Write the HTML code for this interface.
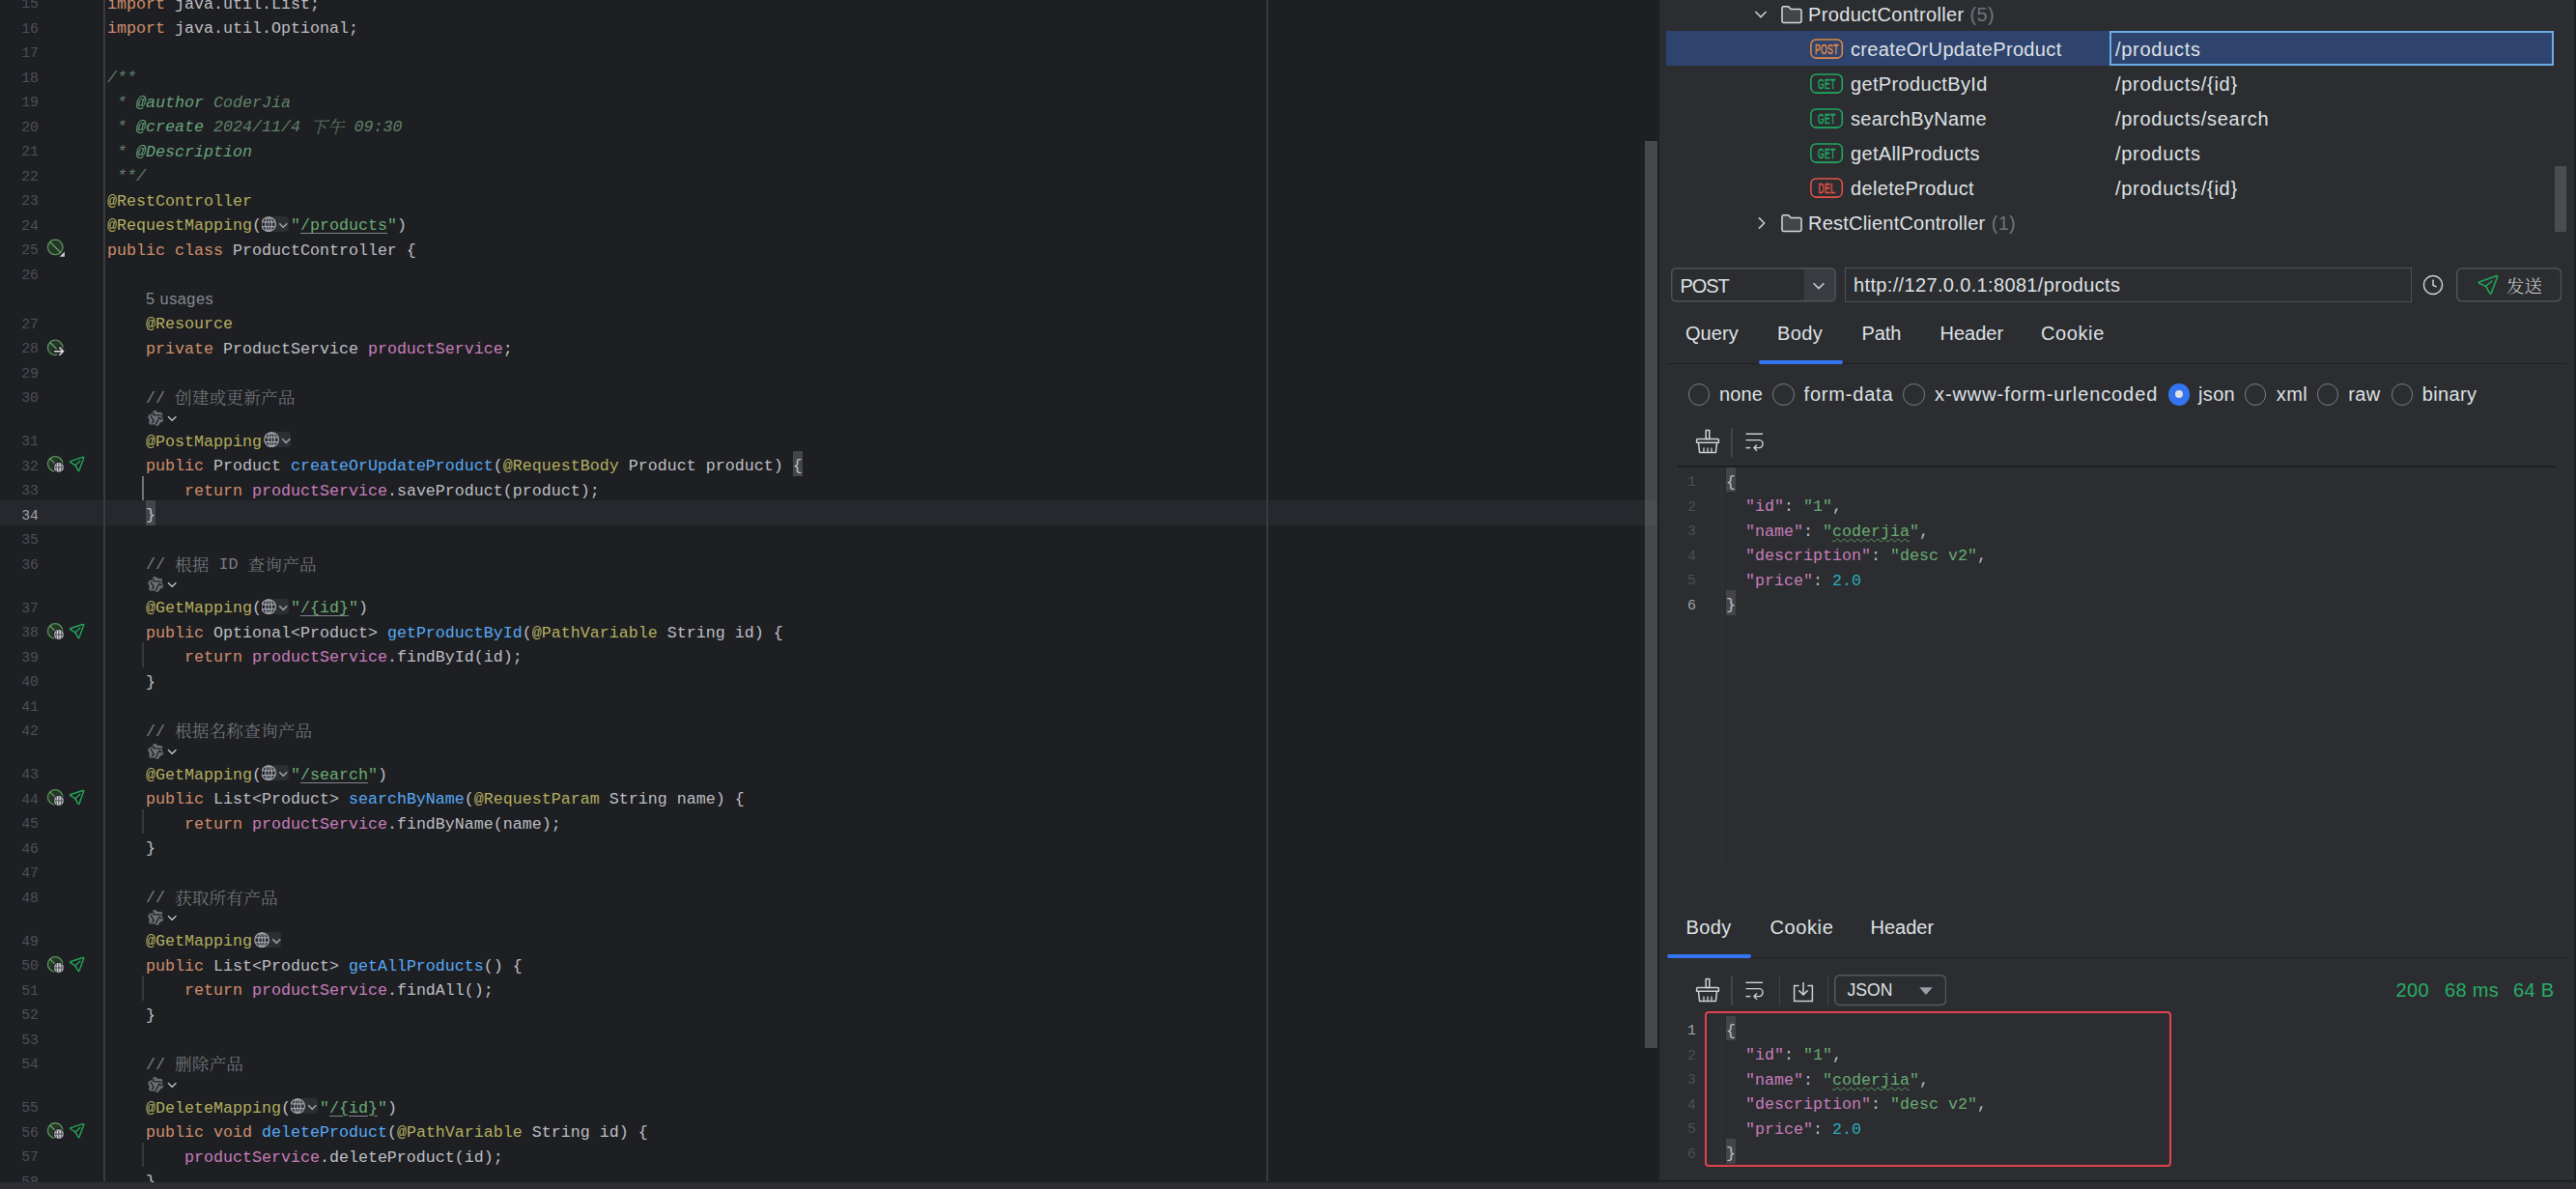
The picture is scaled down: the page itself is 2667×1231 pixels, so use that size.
<!DOCTYPE html>
<html lang="zh"><head><meta charset="utf-8"><title>ProductController</title>
<style>
*{box-sizing:border-box}
html,body{margin:0;padding:0}
body{width:2667px;height:1231px;overflow:hidden;background:#1e1f22;position:relative;font-family:"Liberation Sans","Noto Sans CJK SC",sans-serif;color:#bcbec4}
#ed{position:absolute;left:0;top:0;width:1718px;height:1223.5px;overflow:hidden;background:#1e1f22}
#ed>div,#rp>div,#rp>svg{position:absolute}
.cur{left:0;width:1715px;height:26px;background:#26282e}
.gsep{left:107.3px;top:0;width:1.6px;height:1223px;background:#393b40}
.rm{left:1311px;top:0;width:1.5px;height:1223px;background:#393b40}
.sb{left:1702.5px;top:146px;width:13px;height:938.5px;background:rgba(128,128,128,.42)}
.ln{left:0;width:40px;text-align:right;font:14.8px/25.5px "Liberation Mono",monospace;color:#4b5059;height:25.5px;padding-top:3.5px}
.ln.cl{color:#a1a3ab}
.cd{left:111px;height:25.5px;white-space:pre;font:16.667px/25.5px "Liberation Mono","Noto Serif CJK SC",monospace;color:#bcbec4;padding-top:3px;-webkit-text-stroke:0}
.cd .z{font-size:17.6px;font-family:"Noto Serif CJK SC",serif;line-height:1px;font-weight:300;-webkit-text-stroke:0;position:relative;top:1.5px;letter-spacing:0.2px}
.k{color:#cf8e6d}.a{color:#b3ae60}.f{color:#56a8f5}.p{color:#c77dbb}.s{color:#6aab73}.c{color:#7a7e85}.n{color:#2aacb8}
.d{color:#5f826b;font-style:italic}.t{color:#67a37c;font-style:italic}
.u{text-decoration:underline;text-decoration-color:#80848b;text-decoration-thickness:1.2px;text-underline-offset:3px}
.w{text-decoration:underline wavy #57965c;text-decoration-thickness:1.1px;text-underline-offset:1.5px;text-decoration-skip-ink:none}
.bh{background:#43454a;display:inline-block;height:25.5px;vertical-align:top;margin-top:-3px;padding-top:3px}
.gi{display:inline-block;width:30px;height:16px;vertical-align:top;margin-top:2.5px;background:linear-gradient(90deg,rgba(43,45,48,0) 0,rgba(43,45,48,0) 8px,#2c2e32 16px);border-radius:4px;overflow:hidden;line-height:0}
.gi svg{display:block}
.gi.gp{width:28.5px;margin-right:1.5px;background:linear-gradient(90deg,rgba(43,45,48,0) 0,rgba(43,45,48,0) 6px,#2c2e32 14px)}
.gw{left:40px;top:0;width:0;height:0}
.gsv{position:absolute;left:0}
.us{left:151px;font:16.3px/25.5px "Liberation Sans",sans-serif;color:#868a91;padding-top:2px;letter-spacing:0.5px}
.hi{left:152px;height:19.5px;line-height:0;padding-top:1.5px}
.ig{left:147.3px;width:1.6px;height:25.5px}
#rp{position:absolute;left:1718px;top:0;width:947px;height:1222px;background:#2b2d30;overflow:hidden}
#rp>*{margin-left:-1718px}
#bt{position:absolute;left:0;top:1224px;width:2667px;height:7px;background:#2b2d30}
.sel{left:1725px;top:32px;width:918px;height:36px;background:#2e436e}
.edc{left:2184px;top:32px;width:459.5px;height:36.3px;border:2px solid #6cace9}
.tx{font-size:20px;line-height:36px;color:#dfe1e5;white-space:nowrap;letter-spacing:0.35px}
.g{color:#6f737a}
.bdw{left:1874px}
.bd{display:block;position:relative;width:34.2px;height:21px;text-align:center;line-height:21px}
.bd svg{position:absolute;left:0;top:0}
.bd i{display:block;position:absolute;left:-13px;right:-13px;top:-0.5px;font:15px/21px "Liberation Sans",sans-serif;font-style:normal;transform:scaleX(.575);transform-origin:50% 50%;letter-spacing:0.5px;-webkit-text-stroke:0.5px;text-indent:0.5px}
.tsb{left:2645px;top:172px;width:12px;height:68px;background:#4a4c50}
.box{border:1px solid #4e5157;background:transparent}
.arr{position:absolute;right:0;top:0;bottom:0;width:33px;background:#393b40;border-radius:0 4px 4px 0}
.send{font-family:"Noto Serif CJK SC",serif;font-size:18.5px;letter-spacing:0;color:#ced0d6;font-weight:300}
.hl{background:#1e1f22}
.ul{height:4.2px;background:#3574f0;border-radius:2px}
.rd{width:22.5px;height:22.5px;border-radius:50%;border:1.6px solid #7a7d84}
.rd.on{border:none;background:#3574f0}
.rd.on:after{content:"";position:absolute;left:7.25px;top:7.25px;width:8px;height:8px;border-radius:50%;background:#dfe1e5}
.ic{line-height:0}
.vs{width:1.5px;height:30px;background:#43454a}
.jg{left:1782.3px;width:1.2px;background:#323438}
.jn{left:1729px;width:27px;text-align:right;font:14.8px/25.5px "Liberation Mono",monospace;color:#4b5059;padding-top:3.5px}
.jn.cl{color:#a1a3ab}
.cd.jc{left:1787px}
.st{color:#27ad67}
.red{left:1765px;top:1047px;width:483.2px;height:161px;border:2px solid #e0434f;border-radius:4px}
</style></head><body>
<div id="ed">
<div class="cur" style="top:518.0px"></div><div class="gsep"></div><div class="rm"></div>
<div class="ln" style="top:-11.50px">15</div>
<div class="cd" style="top:-11.50px"><span class="k">import</span> java.util.List;</div>
<div class="ln" style="top:14.00px">16</div>
<div class="cd" style="top:14.00px"><span class="k">import</span> java.util.Optional;</div>
<div class="ln" style="top:39.50px">17</div>
<div class="ln" style="top:65.00px">18</div>
<div class="cd" style="top:65.00px"><span class="d">/**</span></div>
<div class="ln" style="top:90.50px">19</div>
<div class="cd" style="top:90.50px"><span class="d"> * </span><span class="t">@author</span><span class="d"> CoderJia</span></div>
<div class="ln" style="top:116.00px">20</div>
<div class="cd" style="top:116.00px"><span class="d"> * </span><span class="t">@create</span><span class="d"> 2024/11/4 <span class="z">下午</span> 09:30</span></div>
<div class="ln" style="top:141.50px">21</div>
<div class="cd" style="top:141.50px"><span class="d"> * </span><span class="t">@Description</span></div>
<div class="ln" style="top:167.00px">22</div>
<div class="cd" style="top:167.00px"><span class="d"> **/</span></div>
<div class="ln" style="top:192.50px">23</div>
<div class="cd" style="top:192.50px"><span class="a">@RestController</span></div>
<div class="ln" style="top:218.00px">24</div>
<div class="cd" style="top:218.00px"><span class="a">@RequestMapping</span>(<span class="gi gp"><svg width="30" height="16" viewBox="0 0 30 16"><g transform="translate(-3,0)"><g fill="none" stroke="#a3a6ae" stroke-width="1.3"><circle cx="10.1" cy="8.2" r="7.3"/><ellipse cx="10.1" cy="8.2" rx="3.3" ry="7.3"/><path d="M3.4 5.900h13.400M3.400 10.600h13.400M10.100 .9v14.600" stroke-width="1.150"/></g><path d="M21.2 7.2l4.050 4.100 4.050-4.100" fill="none" stroke="#9a9da5" stroke-width="1.600"/></g></svg></span><span class="s">"</span><span class="s u">/products</span><span class="s">"</span>)</div>
<div class="ln" style="top:243.50px">25</div>
<div class="gw"><svg class="gsv" style="top:239.50px" width="60" height="34" viewBox="0 0 60 34"><circle cx="17.20" cy="15.95" r="7.75" fill="#253627" stroke="#57965c" stroke-width="1.3"/><path d="M11.60 10.35L22.80 21.55" stroke="#6fae74" stroke-width="1.1" fill="none"/><path d="M27.60 19.55v6.6h-6.6z" fill="#1e1f22"/><path d="M26.90 20.55v5.2h-5.2z" fill="#ced0d6"/></svg></div>
<div class="cd" style="top:243.50px"><span class="k">public class</span> ProductController {</div>
<div class="ln" style="top:269.00px">26</div>
<div class="ln" style="top:320.00px">27</div>
<div class="cd" style="top:320.00px">    <span class="a">@Resource</span></div>
<div class="ln" style="top:345.50px">28</div>
<div class="gw"><svg class="gsv" style="top:341.50px" width="60" height="34" viewBox="0 0 60 34"><circle cx="17.20" cy="17.90" r="7.75" fill="#253627" stroke="#57965c" stroke-width="1.3"/><path d="M11.60 12.30L22.80 23.50" stroke="#6fae74" stroke-width="1.1" fill="none"/><path d="M16.60 21.70H25.50M21.40 17.60L25.50 21.70L21.40 25.80" stroke="#1e1f22" stroke-width="4.4" fill="none" stroke-linecap="round"/><path d="M16.00 21.70H25.50M21.40 17.60L25.50 21.70L21.40 25.80" stroke="#dfe1e5" stroke-width="1.500" fill="none"/></svg></div>
<div class="cd" style="top:345.50px">    <span class="k">private</span> ProductService <span class="p">productService</span>;</div>
<div class="ln" style="top:371.00px">29</div>
<div class="ln" style="top:396.50px">30</div>
<div class="cd" style="top:396.50px">    <span class="c">// <span class="z">创建或更新产品</span></span></div>
<div class="ln" style="top:441.50px">31</div>
<div class="cd" style="top:441.50px">    <span class="a">@PostMapping</span><span class="gi"><svg width="30" height="16" viewBox="0 0 30 16"><g transform="translate(0,0)"><g fill="none" stroke="#a3a6ae" stroke-width="1.3"><circle cx="10.1" cy="8.2" r="7.3"/><ellipse cx="10.1" cy="8.2" rx="3.3" ry="7.3"/><path d="M3.4 5.900h13.400M3.400 10.600h13.400M10.100 .9v14.600" stroke-width="1.150"/></g><path d="M21.2 7.2l4.050 4.100 4.050-4.100" fill="none" stroke="#9a9da5" stroke-width="1.600"/></g></svg></span></div>
<div class="ln" style="top:467.00px">32</div>
<div class="gw"><svg class="gsv" style="top:463.00px" width="60" height="34" viewBox="0 0 60 34"><circle cx="17.20" cy="17.30" r="7.75" fill="#253627" stroke="#57965c" stroke-width="1.3"/><path d="M11.60 11.70L21.20 21.30" stroke="#6fae74" stroke-width="1.1" fill="none"/><circle cx="20.90" cy="20.90" r="6.1" fill="#1e1f22"/><circle cx="20.90" cy="20.90" r="4.9" fill="#d3d5db"/><path d="M16.20 20.90h9.4M20.90 16.20v9.4M18.70 17.10c-1.1 2.3-1.1 5.3 0 7.6M23.10 17.10c1.1 2.3 1.1 5.3 0 7.6" stroke="#34363b" stroke-width="0.9" fill="none"/><path d="M33.16 -1.52Q31.70 -2.40 33.32 -2.92L45.58 -6.88Q47.20 -7.40 46.61 -5.81L42.09 6.41Q41.50 8.00 40.70 6.50L38.80 2.90Q38.00 1.40 36.54 0.52Z" transform="translate(0,17.30)" fill="none" stroke="#23a559" stroke-width="1.4" stroke-linejoin="round"/><path d="M38.00 1.40L42.90 -3.10" transform="translate(0,17.30)" fill="none" stroke="#23a559" stroke-width="1.4" stroke-linecap="round"/></svg></div>
<div class="cd" style="top:467.00px">    <span class="k">public</span> Product <span class="f">createOrUpdateProduct</span>(<span class="a">@RequestBody</span> Product product) <span class="bh">{</span></div>
<div class="ln" style="top:492.50px">33</div>
<div class="cd" style="top:492.50px">        <span class="k">return</span> <span class="p">productService</span>.saveProduct(product);</div>
<div class="ln cl" style="top:518.00px">34</div>
<div class="cd" style="top:518.00px">    <span class="bh">}</span></div>
<div class="ln" style="top:543.50px">35</div>
<div class="ln" style="top:569.00px">36</div>
<div class="cd" style="top:569.00px">    <span class="c">// <span class="z">根据</span> ID <span class="z">查询产品</span></span></div>
<div class="ln" style="top:614.00px">37</div>
<div class="cd" style="top:614.00px">    <span class="a">@GetMapping</span>(<span class="gi gp"><svg width="30" height="16" viewBox="0 0 30 16"><g transform="translate(-3,0)"><g fill="none" stroke="#a3a6ae" stroke-width="1.3"><circle cx="10.1" cy="8.2" r="7.3"/><ellipse cx="10.1" cy="8.2" rx="3.3" ry="7.3"/><path d="M3.4 5.900h13.400M3.400 10.600h13.400M10.100 .9v14.600" stroke-width="1.150"/></g><path d="M21.2 7.2l4.050 4.100 4.050-4.100" fill="none" stroke="#9a9da5" stroke-width="1.600"/></g></svg></span><span class="s">"</span><span class="s u">/{id}</span><span class="s">"</span>)</div>
<div class="ln" style="top:639.50px">38</div>
<div class="gw"><svg class="gsv" style="top:635.50px" width="60" height="34" viewBox="0 0 60 34"><circle cx="17.20" cy="17.40" r="7.75" fill="#253627" stroke="#57965c" stroke-width="1.3"/><path d="M11.60 11.80L21.20 21.40" stroke="#6fae74" stroke-width="1.1" fill="none"/><circle cx="20.90" cy="21.00" r="6.1" fill="#1e1f22"/><circle cx="20.90" cy="21.00" r="4.9" fill="#d3d5db"/><path d="M16.20 21.00h9.4M20.90 16.30v9.4M18.70 17.20c-1.1 2.3-1.1 5.3 0 7.6M23.10 17.20c1.1 2.3 1.1 5.3 0 7.6" stroke="#34363b" stroke-width="0.9" fill="none"/><path d="M33.16 -1.52Q31.70 -2.40 33.32 -2.92L45.58 -6.88Q47.20 -7.40 46.61 -5.81L42.09 6.41Q41.50 8.00 40.70 6.50L38.80 2.90Q38.00 1.40 36.54 0.52Z" transform="translate(0,17.40)" fill="none" stroke="#23a559" stroke-width="1.4" stroke-linejoin="round"/><path d="M38.00 1.40L42.90 -3.10" transform="translate(0,17.40)" fill="none" stroke="#23a559" stroke-width="1.4" stroke-linecap="round"/></svg></div>
<div class="cd" style="top:639.50px">    <span class="k">public</span> Optional&lt;Product&gt; <span class="f">getProductById</span>(<span class="a">@PathVariable</span> String id) {</div>
<div class="ln" style="top:665.00px">39</div>
<div class="cd" style="top:665.00px">        <span class="k">return</span> <span class="p">productService</span>.findById(id);</div>
<div class="ln" style="top:690.50px">40</div>
<div class="cd" style="top:690.50px">    }</div>
<div class="ln" style="top:716.00px">41</div>
<div class="ln" style="top:741.50px">42</div>
<div class="cd" style="top:741.50px">    <span class="c">// <span class="z">根据名称查询产品</span></span></div>
<div class="ln" style="top:786.50px">43</div>
<div class="cd" style="top:786.50px">    <span class="a">@GetMapping</span>(<span class="gi gp"><svg width="30" height="16" viewBox="0 0 30 16"><g transform="translate(-3,0)"><g fill="none" stroke="#a3a6ae" stroke-width="1.3"><circle cx="10.1" cy="8.2" r="7.3"/><ellipse cx="10.1" cy="8.2" rx="3.3" ry="7.3"/><path d="M3.4 5.900h13.400M3.400 10.600h13.400M10.100 .9v14.600" stroke-width="1.150"/></g><path d="M21.2 7.2l4.050 4.100 4.050-4.100" fill="none" stroke="#9a9da5" stroke-width="1.600"/></g></svg></span><span class="s">"</span><span class="s u">/search</span><span class="s">"</span>)</div>
<div class="ln" style="top:812.00px">44</div>
<div class="gw"><svg class="gsv" style="top:808.00px" width="60" height="34" viewBox="0 0 60 34"><circle cx="17.20" cy="17.40" r="7.75" fill="#253627" stroke="#57965c" stroke-width="1.3"/><path d="M11.60 11.80L21.20 21.40" stroke="#6fae74" stroke-width="1.1" fill="none"/><circle cx="20.90" cy="21.00" r="6.1" fill="#1e1f22"/><circle cx="20.90" cy="21.00" r="4.9" fill="#d3d5db"/><path d="M16.20 21.00h9.4M20.90 16.30v9.4M18.70 17.20c-1.1 2.3-1.1 5.3 0 7.6M23.10 17.20c1.1 2.3 1.1 5.3 0 7.6" stroke="#34363b" stroke-width="0.9" fill="none"/><path d="M33.16 -1.52Q31.70 -2.40 33.32 -2.92L45.58 -6.88Q47.20 -7.40 46.61 -5.81L42.09 6.41Q41.50 8.00 40.70 6.50L38.80 2.90Q38.00 1.40 36.54 0.52Z" transform="translate(0,17.40)" fill="none" stroke="#23a559" stroke-width="1.4" stroke-linejoin="round"/><path d="M38.00 1.40L42.90 -3.10" transform="translate(0,17.40)" fill="none" stroke="#23a559" stroke-width="1.4" stroke-linecap="round"/></svg></div>
<div class="cd" style="top:812.00px">    <span class="k">public</span> List&lt;Product&gt; <span class="f">searchByName</span>(<span class="a">@RequestParam</span> String name) {</div>
<div class="ln" style="top:837.50px">45</div>
<div class="cd" style="top:837.50px">        <span class="k">return</span> <span class="p">productService</span>.findByName(name);</div>
<div class="ln" style="top:863.00px">46</div>
<div class="cd" style="top:863.00px">    }</div>
<div class="ln" style="top:888.50px">47</div>
<div class="ln" style="top:914.00px">48</div>
<div class="cd" style="top:914.00px">    <span class="c">// <span class="z">获取所有产品</span></span></div>
<div class="ln" style="top:959.00px">49</div>
<div class="cd" style="top:959.00px">    <span class="a">@GetMapping</span><span class="gi"><svg width="30" height="16" viewBox="0 0 30 16"><g transform="translate(0,0)"><g fill="none" stroke="#a3a6ae" stroke-width="1.3"><circle cx="10.1" cy="8.2" r="7.3"/><ellipse cx="10.1" cy="8.2" rx="3.3" ry="7.3"/><path d="M3.4 5.900h13.400M3.400 10.600h13.400M10.100 .9v14.600" stroke-width="1.150"/></g><path d="M21.2 7.2l4.050 4.100 4.050-4.100" fill="none" stroke="#9a9da5" stroke-width="1.600"/></g></svg></span></div>
<div class="ln" style="top:984.50px">50</div>
<div class="gw"><svg class="gsv" style="top:980.50px" width="60" height="34" viewBox="0 0 60 34"><circle cx="17.20" cy="17.40" r="7.75" fill="#253627" stroke="#57965c" stroke-width="1.3"/><path d="M11.60 11.80L21.20 21.40" stroke="#6fae74" stroke-width="1.1" fill="none"/><circle cx="20.90" cy="21.00" r="6.1" fill="#1e1f22"/><circle cx="20.90" cy="21.00" r="4.9" fill="#d3d5db"/><path d="M16.20 21.00h9.4M20.90 16.30v9.4M18.70 17.20c-1.1 2.3-1.1 5.3 0 7.6M23.10 17.20c1.1 2.3 1.1 5.3 0 7.6" stroke="#34363b" stroke-width="0.9" fill="none"/><path d="M33.16 -1.52Q31.70 -2.40 33.32 -2.92L45.58 -6.88Q47.20 -7.40 46.61 -5.81L42.09 6.41Q41.50 8.00 40.70 6.50L38.80 2.90Q38.00 1.40 36.54 0.52Z" transform="translate(0,17.40)" fill="none" stroke="#23a559" stroke-width="1.4" stroke-linejoin="round"/><path d="M38.00 1.40L42.90 -3.10" transform="translate(0,17.40)" fill="none" stroke="#23a559" stroke-width="1.4" stroke-linecap="round"/></svg></div>
<div class="cd" style="top:984.50px">    <span class="k">public</span> List&lt;Product&gt; <span class="f">getAllProducts</span>() {</div>
<div class="ln" style="top:1010.00px">51</div>
<div class="cd" style="top:1010.00px">        <span class="k">return</span> <span class="p">productService</span>.findAll();</div>
<div class="ln" style="top:1035.50px">52</div>
<div class="cd" style="top:1035.50px">    }</div>
<div class="ln" style="top:1061.00px">53</div>
<div class="ln" style="top:1086.50px">54</div>
<div class="cd" style="top:1086.50px">    <span class="c">// <span class="z">删除产品</span></span></div>
<div class="ln" style="top:1131.50px">55</div>
<div class="cd" style="top:1131.50px">    <span class="a">@DeleteMapping</span>(<span class="gi gp"><svg width="30" height="16" viewBox="0 0 30 16"><g transform="translate(-3,0)"><g fill="none" stroke="#a3a6ae" stroke-width="1.3"><circle cx="10.1" cy="8.2" r="7.3"/><ellipse cx="10.1" cy="8.2" rx="3.3" ry="7.3"/><path d="M3.4 5.900h13.400M3.400 10.600h13.400M10.100 .9v14.600" stroke-width="1.150"/></g><path d="M21.2 7.2l4.050 4.100 4.050-4.100" fill="none" stroke="#9a9da5" stroke-width="1.600"/></g></svg></span><span class="s">"</span><span class="s u">/{id}</span><span class="s">"</span>)</div>
<div class="ln" style="top:1157.00px">56</div>
<div class="gw"><svg class="gsv" style="top:1153.00px" width="60" height="34" viewBox="0 0 60 34"><circle cx="17.20" cy="17.50" r="7.75" fill="#253627" stroke="#57965c" stroke-width="1.3"/><path d="M11.60 11.90L21.20 21.50" stroke="#6fae74" stroke-width="1.1" fill="none"/><circle cx="20.90" cy="21.10" r="6.1" fill="#1e1f22"/><circle cx="20.90" cy="21.10" r="4.9" fill="#d3d5db"/><path d="M16.20 21.10h9.4M20.90 16.40v9.4M18.70 17.30c-1.1 2.3-1.1 5.3 0 7.6M23.10 17.30c1.1 2.3 1.1 5.3 0 7.6" stroke="#34363b" stroke-width="0.9" fill="none"/><path d="M33.16 -1.52Q31.70 -2.40 33.32 -2.92L45.58 -6.88Q47.20 -7.40 46.61 -5.81L42.09 6.41Q41.50 8.00 40.70 6.50L38.80 2.90Q38.00 1.40 36.54 0.52Z" transform="translate(0,17.50)" fill="none" stroke="#23a559" stroke-width="1.4" stroke-linejoin="round"/><path d="M38.00 1.40L42.90 -3.10" transform="translate(0,17.50)" fill="none" stroke="#23a559" stroke-width="1.4" stroke-linecap="round"/></svg></div>
<div class="cd" style="top:1157.00px">    <span class="k">public void</span> <span class="f">deleteProduct</span>(<span class="a">@PathVariable</span> String id) {</div>
<div class="ln" style="top:1182.50px">57</div>
<div class="cd" style="top:1182.50px">        <span class="p">productService</span>.deleteProduct(id);</div>
<div class="ln" style="top:1208.00px">58</div>
<div class="cd" style="top:1208.00px">    }</div>
<div class="us" style="top:294.50px">5 usages</div>
<div class="hi" style="top:422.00px"><svg width="34" height="20" viewBox="0 0 34 20"><path d="M7.3 1.050L9.9 1.250 10.5 2.800 15.4 3.100 16.3 4.900 15.4 6.900 17.1 10.100 16.4 12.750 14.2 13.200 11.5 17 9.1 16.500 8.5 15.400 3.100 15.400 2.050 13.200 2.900 11.300 1.050 7.400 2.700 5.100 5.500 4.500 6.500 1.850Z" fill="#6c6f75"/><path d="M7.4 2.900L6.600 5.700 15 6.200M3.800 6.200L7.400 12.100 4.700 14M9.200 15.400L12.750 8.400 16 10.100" fill="none" stroke="#1e1f22" stroke-width="1.250" stroke-linejoin="round"/><path d="M22 7.200l4.200 4.100 4.200-4.100" fill="none" stroke="#c8cad0" stroke-width="1.200"/></svg></div>
<div class="hi" style="top:594.50px"><svg width="34" height="20" viewBox="0 0 34 20"><path d="M7.3 1.050L9.9 1.250 10.5 2.800 15.4 3.100 16.3 4.900 15.4 6.900 17.1 10.100 16.4 12.750 14.2 13.200 11.5 17 9.1 16.500 8.5 15.400 3.100 15.400 2.050 13.200 2.900 11.300 1.050 7.400 2.700 5.100 5.500 4.500 6.500 1.850Z" fill="#6c6f75"/><path d="M7.4 2.900L6.600 5.700 15 6.200M3.800 6.200L7.400 12.100 4.700 14M9.200 15.400L12.750 8.400 16 10.100" fill="none" stroke="#1e1f22" stroke-width="1.250" stroke-linejoin="round"/><path d="M22 7.200l4.200 4.100 4.200-4.100" fill="none" stroke="#c8cad0" stroke-width="1.200"/></svg></div>
<div class="hi" style="top:767.00px"><svg width="34" height="20" viewBox="0 0 34 20"><path d="M7.3 1.050L9.9 1.250 10.5 2.800 15.4 3.100 16.3 4.900 15.4 6.900 17.1 10.100 16.4 12.750 14.2 13.200 11.5 17 9.1 16.500 8.5 15.400 3.100 15.400 2.050 13.200 2.900 11.300 1.050 7.400 2.700 5.100 5.500 4.500 6.500 1.850Z" fill="#6c6f75"/><path d="M7.4 2.900L6.600 5.700 15 6.200M3.800 6.200L7.400 12.100 4.700 14M9.200 15.400L12.750 8.400 16 10.100" fill="none" stroke="#1e1f22" stroke-width="1.250" stroke-linejoin="round"/><path d="M22 7.200l4.200 4.100 4.200-4.100" fill="none" stroke="#c8cad0" stroke-width="1.200"/></svg></div>
<div class="hi" style="top:939.50px"><svg width="34" height="20" viewBox="0 0 34 20"><path d="M7.3 1.050L9.9 1.250 10.5 2.800 15.4 3.100 16.3 4.900 15.4 6.900 17.1 10.100 16.4 12.750 14.2 13.200 11.5 17 9.1 16.500 8.5 15.400 3.100 15.400 2.050 13.200 2.900 11.300 1.050 7.400 2.700 5.100 5.500 4.500 6.500 1.850Z" fill="#6c6f75"/><path d="M7.4 2.900L6.600 5.700 15 6.200M3.800 6.200L7.400 12.100 4.700 14M9.200 15.400L12.750 8.400 16 10.100" fill="none" stroke="#1e1f22" stroke-width="1.250" stroke-linejoin="round"/><path d="M22 7.200l4.200 4.100 4.200-4.100" fill="none" stroke="#c8cad0" stroke-width="1.200"/></svg></div>
<div class="hi" style="top:1112.00px"><svg width="34" height="20" viewBox="0 0 34 20"><path d="M7.3 1.050L9.9 1.250 10.5 2.800 15.4 3.100 16.3 4.900 15.4 6.900 17.1 10.100 16.4 12.750 14.2 13.200 11.5 17 9.1 16.500 8.5 15.400 3.100 15.400 2.050 13.200 2.900 11.300 1.050 7.400 2.700 5.100 5.500 4.500 6.500 1.850Z" fill="#6c6f75"/><path d="M7.4 2.900L6.600 5.700 15 6.200M3.800 6.200L7.400 12.100 4.700 14M9.200 15.400L12.750 8.400 16 10.100" fill="none" stroke="#1e1f22" stroke-width="1.250" stroke-linejoin="round"/><path d="M22 7.200l4.200 4.100 4.200-4.100" fill="none" stroke="#c8cad0" stroke-width="1.200"/></svg></div>
<div class="ig" style="top:492.50px;background:#6f737a"></div>
<div class="ig" style="top:665.00px;background:#36383d"></div>
<div class="ig" style="top:837.50px;background:#36383d"></div>
<div class="ig" style="top:1010.00px;background:#36383d"></div>
<div class="ig" style="top:1182.50px;background:#36383d"></div>
<div class="sb"></div>
</div>
<div id="rp">
<div class="sel"></div><div class="edc"></div>
<svg class="chv" style="left:1816px;top:9px" width="14" height="12" viewBox="0 0 14 12"><path d="M1.4 3l5.6 5.6L12.6 3" fill="none" stroke="#ced0d6" stroke-width="1.5"/></svg>
<div class="fi" style="left:1843px;top:5px"><svg class="fo" width="24" height="20" viewBox="0 0 24 20"><path d="M2 3.2a1.4 1.4 0 0 1 1.4-1.4h5.2l2.6 2.8h9.4a1.4 1.4 0 0 1 1.4 1.4v11a1.4 1.4 0 0 1-1.4 1.4H3.4A1.4 1.4 0 0 1 2 17z" fill="#43454a" stroke="#d7d9de" stroke-width="1.5" stroke-linejoin="round"/></svg></div>
<div class="tx" style="left:1872px;top:-3px">ProductController <span class="g">(5)</span></div>
<div class="bdw" style="top:40.0px"><span class="bd" style="color:#e08a42"><svg width="36" height="22" viewBox="0 0 36 22"><rect x="0.9" y="0.900" width="32.4" height="19.200" rx="5.2" fill="none" stroke="#e08a42" stroke-width="1.550"/></svg><i>POST</i></span></div>
<div class="tx" style="left:1916px;top:33px">createOrUpdateProduct</div>
<div class="tx" style="left:2190px;top:33px;letter-spacing:0.72px">/products</div>
<div class="bdw" style="top:76.0px"><span class="bd" style="color:#20aa62"><svg width="36" height="22" viewBox="0 0 36 22"><rect x="0.9" y="0.900" width="32.4" height="19.200" rx="5.2" fill="none" stroke="#20aa62" stroke-width="1.550"/></svg><i>GET</i></span></div>
<div class="tx" style="left:1916px;top:69px">getProductById</div>
<div class="tx" style="left:2190px;top:69px;letter-spacing:0.72px">/products/{id}</div>
<div class="bdw" style="top:112.0px"><span class="bd" style="color:#20aa62"><svg width="36" height="22" viewBox="0 0 36 22"><rect x="0.9" y="0.900" width="32.4" height="19.200" rx="5.2" fill="none" stroke="#20aa62" stroke-width="1.550"/></svg><i>GET</i></span></div>
<div class="tx" style="left:1916px;top:105px">searchByName</div>
<div class="tx" style="left:2190px;top:105px;letter-spacing:0.72px">/products/search</div>
<div class="bdw" style="top:148.0px"><span class="bd" style="color:#20aa62"><svg width="36" height="22" viewBox="0 0 36 22"><rect x="0.9" y="0.900" width="32.4" height="19.200" rx="5.2" fill="none" stroke="#20aa62" stroke-width="1.550"/></svg><i>GET</i></span></div>
<div class="tx" style="left:1916px;top:141px">getAllProducts</div>
<div class="tx" style="left:2190px;top:141px;letter-spacing:0.72px">/products</div>
<div class="bdw" style="top:184.0px"><span class="bd" style="color:#e5534b"><svg width="36" height="22" viewBox="0 0 36 22"><rect x="0.9" y="0.900" width="32.4" height="19.200" rx="5.2" fill="none" stroke="#e5534b" stroke-width="1.550"/></svg><i>DEL</i></span></div>
<div class="tx" style="left:1916px;top:177px">deleteProduct</div>
<div class="tx" style="left:2190px;top:177px;letter-spacing:0.72px">/products/{id}</div>
<svg class="chv" style="left:1818px;top:224px" width="12" height="14" viewBox="0 0 12 14"><path d="M3 1.4l5.6 5.6L3 12.6" fill="none" stroke="#ced0d6" stroke-width="1.5"/></svg>
<div class="fi" style="left:1843px;top:221px"><svg class="fo" width="24" height="20" viewBox="0 0 24 20"><path d="M2 3.2a1.4 1.4 0 0 1 1.4-1.4h5.2l2.6 2.8h9.4a1.4 1.4 0 0 1 1.4 1.4v11a1.4 1.4 0 0 1-1.4 1.4H3.4A1.4 1.4 0 0 1 2 17z" fill="#43454a" stroke="#d7d9de" stroke-width="1.5" stroke-linejoin="round"/></svg></div>
<div class="tx" style="left:1872px;top:213px;letter-spacing:0.22px">RestClientController<span class="g" style="margin-left:6.5px">(1)</span></div>
<div class="tsb"></div>
<svg class="chv" style="left:1730.20px;top:277.00px" width="170.80" height="35.60" viewBox="0 0 170.80 35.60"><path d="M137.8 0.75h28.5a3.75 3.75 0 0 1 3.75 3.75v26.6a3.75 3.75 0 0 1-3.75 3.75h-28.5z" fill="#393b40"/><rect x="0.75" y="0.75" width="169.30" height="34.10" rx="4.5" fill="none" stroke="#505359" stroke-width="1.50"/></svg>
<div class="tx" style="left:1739.5px;top:278px;line-height:36px;letter-spacing:-1.1px">POST</div>
<svg class="chv" style="left:1876px;top:290px" width="14" height="12" viewBox="0 0 14 12"><path d="M1.6 3.2l5.4 5.4 5.4-5.4" fill="none" stroke="#ced0d6" stroke-width="1.5"/></svg>
<div class="box" style="left:1910px;top:277px;width:586.5px;height:35.5px"></div>
<div class="tx url" style="left:1919px;top:276.5px;line-height:36px">http://127.0.0.1:8081/products</div>
<svg class="chv" style="left:2507px;top:283px" width="24" height="24" viewBox="0 0 24 24"><circle cx="12" cy="12" r="9.6" fill="none" stroke="#ced0d6" stroke-width="1.5"/><path d="M12 6.6v5.6l3.6 2" fill="none" stroke="#ced0d6" stroke-width="1.5"/></svg>
<svg class="chv" style="left:2543.00px;top:277.00px" width="109.30" height="35.60" viewBox="0 0 109.30 35.60"><rect x="0.75" y="0.75" width="107.80" height="34.10" rx="5.0" fill="none" stroke="#505359" stroke-width="1.50"/></svg>
<svg class="chv" style="left:2563px;top:283px" width="26" height="26" viewBox="0 0 26 26"><path d="M4.30 10.43Q2.30 9.50 4.37 8.75L21.13 2.65Q23.20 1.90 22.44 3.96L16.46 20.14Q15.70 22.20 14.59 20.30L11.61 15.20Q10.50 13.30 8.50 12.37Z" fill="none" stroke="#23a559" stroke-width="1.600" stroke-linejoin="round"/><path d="M10.5 13.300L17 8" fill="none" stroke="#23a559" stroke-width="1.600" stroke-linecap="round"/></svg>
<div class="tx send" style="left:2595px;top:277px;line-height:36px">发送</div>
<div class="hl" style="left:1725px;top:376px;width:933px;height:1px"></div>
<div class="tx tab" style="left:1745.0px;top:327px;letter-spacing:0.05px">Query</div>
<div class="tx tab" style="left:1840.0px;top:327px;letter-spacing:0.35px">Body</div>
<div class="tx tab" style="left:1927.5px;top:327px;letter-spacing:-0.10px">Path</div>
<div class="tx tab" style="left:2008.5px;top:327px;letter-spacing:0.00px">Header</div>
<div class="tx tab" style="left:2113.0px;top:327px;letter-spacing:0.60px">Cookie</div>
<div class="ul" style="left:1821.0px;top:373.0px;width:86.5px"></div>
<div class="rd" style="left:1747.8px;top:397px"></div>
<div class="tx" style="left:1780.0px;top:390px;letter-spacing:0.10px">none</div>
<div class="rd" style="left:1835.0px;top:397px"></div>
<div class="tx" style="left:1867.6px;top:390px;letter-spacing:0.80px">form-data</div>
<div class="rd" style="left:1970.0px;top:397px"></div>
<div class="tx" style="left:2003.0px;top:390px;letter-spacing:0.90px">x-www-form-urlencoded</div>
<div class="rd on" style="left:2244.9px;top:397px"></div>
<div class="tx" style="left:2276.0px;top:390px;letter-spacing:0.35px">json</div>
<div class="rd" style="left:2323.9px;top:397px"></div>
<div class="tx" style="left:2356.8px;top:390px;letter-spacing:0.35px">xml</div>
<div class="rd" style="left:2398.9px;top:397px"></div>
<div class="tx" style="left:2431.3px;top:390px;letter-spacing:0.35px">raw</div>
<div class="rd" style="left:2475.8px;top:397px"></div>
<div class="tx" style="left:2507.7px;top:390px;letter-spacing:0.35px">binary</div>
<div class="ic" style="left:1755px;top:443.5px"><svg width="26" height="26" viewBox="0 0 26 26"><g fill="none" stroke="#ced0d6" stroke-width="1.5" stroke-linejoin="round"><path d="M11.2 1.6h3.6v9h-3.6z"/><path d="M2.6 10.6h20.8a1 1 0 0 1 1 1v2.6H1.6v-2.6a1 1 0 0 1 1-1z"/><path d="M3.4 14.2l1.2 10.2h16.8l1.2-10.2"/><path d="M9 24v-4.6M13 24v-4.6M17 24v-4.6" stroke-width="1.3"/></g></svg></div>
<div class="vs" style="left:1792px;top:442.5px"></div>
<div class="ic" style="left:1805.8px;top:446.7px"><svg width="21" height="21" viewBox="0 0 22 22"><g fill="none" stroke="#ced0d6" stroke-width="1.5"><path d="M1.6 2.4h18.4"/><path d="M1.6 9h14.2a4.2 4.2 0 0 1 0 8.4H10.6"/><path d="M1.6 17.4h5"/><path d="M13.6 14.2l-3.2 3.2 3.2 3.2" stroke-linejoin="round"/></g></svg></div>
<div class="hl" style="left:1737px;top:482px;width:909px;height:2px"></div>
<div class="jg" style="top:484px;height:410px"></div>
<div class="jn" style="top:483.70px">1</div>
<div class="cd jc" style="top:483.70px"><span class="bh">{</span></div>
<div class="jn" style="top:509.20px">2</div>
<div class="cd jc" style="top:509.20px">  <span class="p">"id"</span>: <span class="s">"1"</span>,</div>
<div class="jn" style="top:534.70px">3</div>
<div class="cd jc" style="top:534.70px">  <span class="p">"name"</span>: <span class="s">"</span><span class="s w">coderjia</span><span class="s">"</span>,</div>
<div class="jn" style="top:560.20px">4</div>
<div class="cd jc" style="top:560.20px">  <span class="p">"description"</span>: <span class="s">"desc v2"</span>,</div>
<div class="jn" style="top:585.70px">5</div>
<div class="cd jc" style="top:585.70px">  <span class="p">"price"</span>: <span class="n">2.0</span></div>
<div class="jn cl" style="top:611.20px">6</div>
<div class="cd jc" style="top:611.20px"><span class="bh">}</span></div>
<div class="hl" style="left:1725px;top:991px;width:933px;height:1px"></div>
<div class="tx tab" style="left:1745.5px;top:942px;letter-spacing:0.35px">Body</div>
<div class="tx tab" style="left:1832.5px;top:942px;letter-spacing:0.60px">Cookie</div>
<div class="tx tab" style="left:1936.5px;top:942px;letter-spacing:0.00px">Header</div>
<div class="ul" style="left:1726.0px;top:988.0px;width:86.5px"></div>
<div class="ic" style="left:1755px;top:1011.5px"><svg width="26" height="26" viewBox="0 0 26 26"><g fill="none" stroke="#ced0d6" stroke-width="1.5" stroke-linejoin="round"><path d="M11.2 1.6h3.6v9h-3.6z"/><path d="M2.6 10.6h20.8a1 1 0 0 1 1 1v2.6H1.6v-2.6a1 1 0 0 1 1-1z"/><path d="M3.4 14.2l1.2 10.2h16.8l1.2-10.2"/><path d="M9 24v-4.6M13 24v-4.6M17 24v-4.6" stroke-width="1.3"/></g></svg></div>
<div class="vs" style="left:1792px;top:1010.5px"></div>
<div class="ic" style="left:1805.8px;top:1014.7px"><svg width="21" height="21" viewBox="0 0 22 22"><g fill="none" stroke="#ced0d6" stroke-width="1.5"><path d="M1.6 2.4h18.4"/><path d="M1.6 9h14.2a4.2 4.2 0 0 1 0 8.4H10.6"/><path d="M1.6 17.4h5"/><path d="M13.6 14.2l-3.2 3.2 3.2 3.2" stroke-linejoin="round"/></g></svg></div>
<div class="vs" style="left:1841.5px;top:1010.5px"></div>
<div class="ic" style="left:1856px;top:1015.5px"><svg width="22" height="22" viewBox="0 0 22 22"><g fill="none" stroke="#ced0d6" stroke-width="1.5"><path d="M6.6 4.4H1.6v16h18.8v-16h-5"/><path d="M11 1v12.6M6.4 9.4l4.6 4.6 4.6-4.6"/></g></svg></div>
<div class="vs" style="left:1891.5px;top:1010.5px"></div>
<svg class="chv" style="left:1898.50px;top:1009.40px" width="116.30" height="32.30" viewBox="0 0 116.30 32.30"><rect x="0.75" y="0.75" width="114.80" height="30.80" rx="5.0" fill="none" stroke="#55585e" stroke-width="1.50"/></svg>
<div class="tx" style="left:1912.5px;top:1009px;line-height:33px;font-size:17.6px;letter-spacing:0">JSON</div>
<svg class="chv" style="left:1986px;top:1021px" width="16" height="10" viewBox="0 0 16 10"><path d="M1.2 1.2h13.6L8 9z" fill="#9da0a8"/></svg>
<div class="tx st" style="left:2480.5px;top:1007px">200</div><div class="tx st" style="left:2531px;top:1007px">68 ms</div><div class="tx st" style="left:2602px;top:1007px">64 B</div>
<div class="jg" style="top:1049px;height:165px"></div>
<div class="jn cl" style="top:1051.50px">1</div>
<div class="cd jc" style="top:1051.50px"><span class="bh">{</span></div>
<div class="jn" style="top:1077.00px">2</div>
<div class="cd jc" style="top:1077.00px">  <span class="p">"id"</span>: <span class="s">"1"</span>,</div>
<div class="jn" style="top:1102.50px">3</div>
<div class="cd jc" style="top:1102.50px">  <span class="p">"name"</span>: <span class="s">"</span><span class="s w">coderjia</span><span class="s">"</span>,</div>
<div class="jn" style="top:1128.00px">4</div>
<div class="cd jc" style="top:1128.00px">  <span class="p">"description"</span>: <span class="s">"desc v2"</span>,</div>
<div class="jn" style="top:1153.50px">5</div>
<div class="cd jc" style="top:1153.50px">  <span class="p">"price"</span>: <span class="n">2.0</span></div>
<div class="jn" style="top:1179.00px">6</div>
<div class="cd jc" style="top:1179.00px"><span class="bh">}</span></div>
<div class="red"></div>
</div>
<div id="bt"></div>
</body></html>
